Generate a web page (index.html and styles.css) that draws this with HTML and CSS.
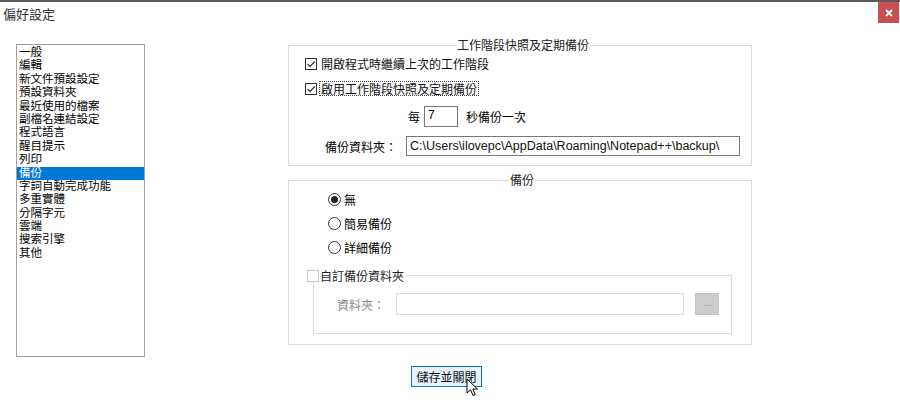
FILE: index.html
```html
<!DOCTYPE html>
<html lang="zh-Hant">
<head>
<meta charset="utf-8">
<title>偏好設定</title>
<link rel="stylesheet" href="styles.css">
</head>
<body>
<div class="window">
  <div class="titlebar">
    <span class="title">偏好設定</span>
    <span class="close"><svg width="8" height="8" viewBox="0 0 8 8"><path d="M1 1L7 7M7 1L1 7" stroke="#fff" stroke-width="1.8"/></svg></span>
  </div>
  <div class="main">
    <ul class="list">
      <li>一般</li>
      <li>編輯</li>
      <li>新文件預設設定</li>
      <li>預設資料夾</li>
      <li>最近使用的檔案</li>
      <li>副檔名連結設定</li>
      <li>程式語言</li>
      <li>醒目提示</li>
      <li>列印</li>
      <li class="selected">備份</li>
      <li>字詞自動完成功能</li>
      <li>多重實體</li>
      <li>分隔字元</li>
      <li>雲端</li>
      <li>搜索引擎</li>
      <li>其他</li>
    </ul>
    <div class="content">
      <div class="group group-session">
        <span class="group-title title-session">工作階段快照及定期備份</span>
        <div class="row row-cb1">
          <span class="cb"><svg width="10" height="10" viewBox="0 0 10 10"><path d="M1.5 5L4 7.5L8.8 2.5" fill="none" stroke="#2b2b2b" stroke-width="1.1"/></svg></span>
          <span class="cb-label">開啟程式時繼續上次的工作階段</span>
        </div>
        <div class="row row-cb2">
          <span class="cb"><svg width="10" height="10" viewBox="0 0 10 10"><path d="M1.5 5L4 7.5L8.8 2.5" fill="none" stroke="#2b2b2b" stroke-width="1.1"/></svg></span>
          <span class="cb-label focus">啟用工作階段快照及定期備份</span>
        </div>
        <div class="row row-interval">
          <span>每</span>
          <span class="edit edit-sec">7</span>
          <span class="sec-label">秒備份一次</span>
        </div>
        <div class="row row-folder">
          <span>備份資料夾：</span>
          <span class="edit edit-path">C:\Users\ilovepc\AppData\Roaming\Notepad++\backup\</span>
        </div>
      </div>

      <div class="group group-backup">
        <span class="group-title title-backup">備份</span>
        <div class="radios">
          <div class="row radio-row"><span class="radio on"></span><span class="radio-label">無</span></div>
          <div class="row radio-row"><span class="radio"></span><span class="radio-label">簡易備份</span></div>
          <div class="row radio-row"><span class="radio"></span><span class="radio-label">詳細備份</span></div>
        </div>
        <div class="group inner">
          <span class="inner-title"><span class="cb cb-off"></span><span>自訂備份資料夾</span></span>
          <div class="row row-custom">
            <span class="disabled-label">資料夾：</span>
            <span class="edit edit-custom"></span>
            <span class="dots">...</span>
          </div>
        </div>
      </div>

      <div class="btn-wrap">
        <span class="save">儲存並關閉
          <svg class="cursor" width="14" height="20" viewBox="0 0 14 20"><path d="M1 1L1 15L4.5 11.8L7 17.5L9.2 16.5L6.8 11L11.5 11Z" fill="#fff" stroke="#000" stroke-width="1" stroke-linejoin="round"/></svg>
        </span>
      </div>
    </div>
  </div>
</div>
</body>
</html>
```
FILE: styles.css
```css
html, body {
  margin: 0;
  padding: 0;
  background: #fff;
}
body {
  width: 900px;
  height: 400px;
  overflow: hidden;
  font-family: "Noto Sans CJK TC", "Noto Sans", sans-serif;
  font-size: 12px;
  color: #000;
}
.window {
  border-top: 2px solid #5b5b5b;
  height: 398px;
}
.titlebar {
  display: flex;
  justify-content: space-between;
  align-items: flex-start;
  height: 24px;
}
.title {
  padding-left: 3px;
  font-size: 13px;
  line-height: 24px;
  color: #333;
}
.close {
  width: 21px;
  height: 21px;
  margin-right: 1px;
  background: #c75050;
  display: flex;
  align-items: center;
  justify-content: center;
}
.main {
  display: flex;
  align-items: flex-start;
  padding-left: 16px;
  margin-top: 18px;
}
.list {
  list-style: none;
  margin: 0;
  padding: 1px 0 0 0;
  width: 127px;
  height: 310px;
  border: 1px solid #a0a0a0;
  font-family: "Liberation Sans", "Noto Sans CJK TC", sans-serif;
  font-size: 11.5px;
}
.list li {
  height: 13.4px;
  line-height: 13.4px;
  padding-left: 2px;
  white-space: nowrap;
}
.list li.selected {
  background: #0078d7;
  color: #fff;
}
.content {
  margin-left: 143px;
  width: 464px;
  margin-top: 1px;
}
.group {
  position: relative;
  border: 1px solid #dcdcdc;
}
.group-title {
  position: absolute;
  top: -8px;
  background: #fff;
  padding: 0 1px;
  line-height: 14px;
  color: #222;
}
.title-session { left: 167px; }
.title-backup { left: 220px; }
.row {
  display: flex;
  align-items: center;
}
.group-session {
  padding: 11px 0 9px 0;
}
.row-cb1, .row-cb2 {
  height: 13px;
  padding-left: 16px;
}
.row-cb2 { margin-top: 12px; }
.cb {
  box-sizing: border-box;
  width: 12px;
  height: 12px;
  border: 1px solid #333;
  display: inline-flex;
  align-items: center;
  justify-content: center;
  background: #fff;
  flex: none;
}
.cb-label {
  margin-left: 4px;
  line-height: 13px;
  color: #111;
}
.focus {
  margin-left: 3px;
  outline: 1px dotted #444;
  outline-offset: 0;
  padding: 0 1px;
}
.row-interval {
  margin-top: 11px;
  height: 21px;
  padding-left: 119px;
}
.edit {
  box-sizing: border-box;
  border: 1px solid #7a7a7a;
  background: #fff;
  height: 21px;
  line-height: 19px;
  padding-left: 3px;
  font-family: "Liberation Sans", "Noto Sans CJK TC", sans-serif;
  font-size: 12px;
}
.edit-sec {
  width: 34px;
  margin-left: 4px;
  line-height: 16px;
}
.sec-label { margin-left: 8px; }
.row-folder {
  margin-top: 9px;
  height: 20px;
  padding-left: 36px;
}
.edit-path {
  width: 334px;
  height: 20px;
  line-height: 18px;
  margin-left: 9px;
  font-size: 12.5px;
  color: #111;
}
.group-backup {
  margin-top: 14px;
  padding: 12px 0 10px 0;
}
.radios {
  display: flex;
  flex-direction: column;
  gap: 11px;
  padding-left: 39px;
}
.radio-row { height: 13px; }
.radio {
  box-sizing: border-box;
  width: 13px;
  height: 13px;
  border: 1px solid #333;
  border-radius: 50%;
  display: inline-flex;
  align-items: center;
  justify-content: center;
  flex: none;
}
.radio.on::after {
  content: "";
  width: 7px;
  height: 7px;
  border-radius: 50%;
  background: #222;
}
.radio-label { margin-left: 3px; }
.inner {
  margin: 21px 19px 0 24px;
  padding: 17px 0 18px 0;
}
.inner-title {
  position: absolute;
  top: -7px;
  left: -7px;
  display: flex;
  align-items: center;
  background: #fff;
  padding-right: 2px;
  line-height: 13px;
  color: #222;
}
.cb-off {
  border-color: #c8c8c8;
  margin-right: 1px;
}
.row-custom {
  height: 22px;
  padding-left: 23px;
}
.disabled-label { color: #8a8a8a; }
.edit-custom {
  width: 288px;
  height: 22px;
  margin-left: 11px;
  border-color: #d9d9d9;
}
.dots {
  box-sizing: border-box;
  width: 24px;
  height: 22px;
  margin-left: 11px;
  background: #cccccc;
  border: 1px solid #c4c4c4;
  color: #8f8f8f;
  font-size: 10px;
  display: flex;
  align-items: center;
  justify-content: center;
  padding-bottom: 3px;
  font-family: "Liberation Sans", sans-serif;
}
.btn-wrap {
  margin-top: 21px;
  padding-left: 123px;
}
.save {
  position: relative;
  box-sizing: border-box;
  display: inline-flex;
  align-items: center;
  justify-content: center;
  width: 71px;
  height: 21px;
  border: 1px solid #0078d7;
  background: #e5f1fb;
  color: #111;
}
.cursor {
  position: absolute;
  left: 54px;
  top: 11px;
}
```
